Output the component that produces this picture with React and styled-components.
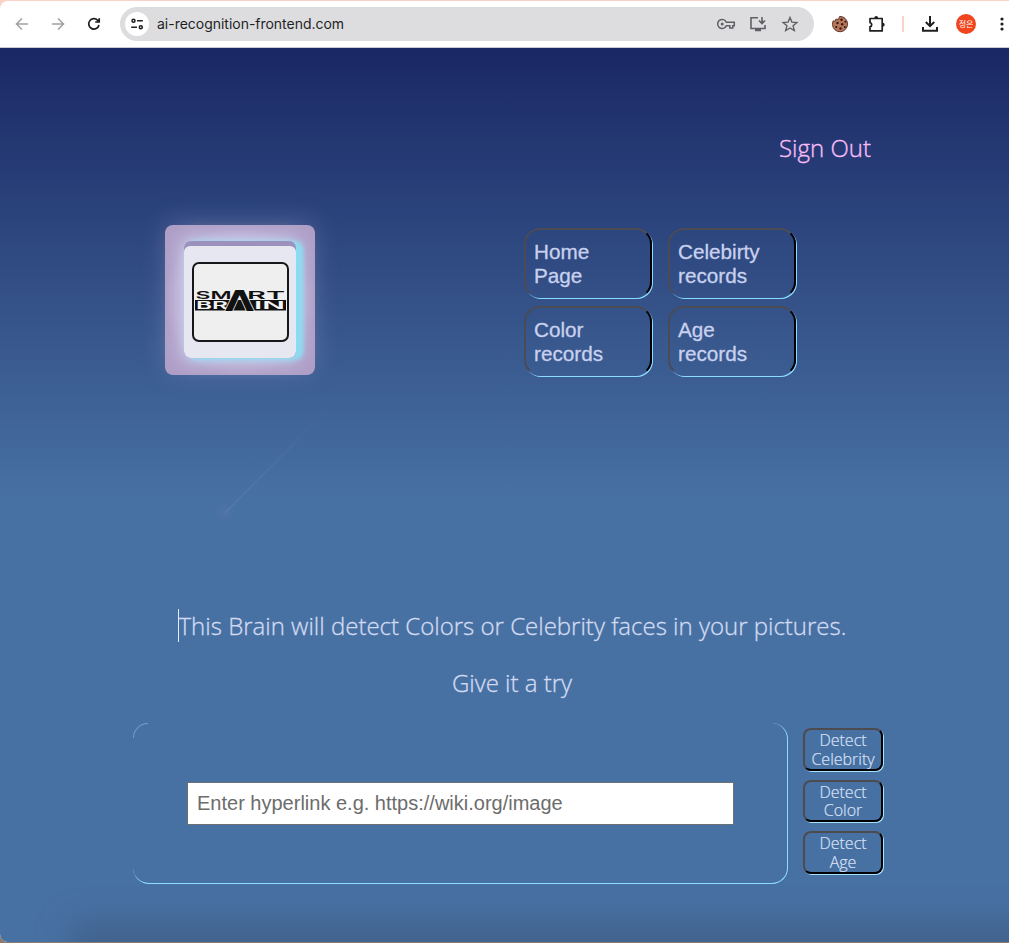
import React from 'react';
import styled, { createGlobalStyle } from 'styled-components';

const Global = createGlobalStyle`
  *, *::before, *::after { box-sizing: border-box; }
  html, body, #root { margin: 0; padding: 0; }
  body { width: 1009px; height: 943px; overflow: hidden; background: #a07a62; }
`;

const Desktop = styled.div`
  width: 1009px;
  height: 943px;
  overflow: hidden;
  background: linear-gradient(#fbd3c6 0 20px, #a9754f 20px 938px, #8d7a72 938px);
  font-family: "Open Sans", "Noto Sans", sans-serif;
`;
const Window = styled.div`
  width: 1017px;
  height: 941px;
  margin-top: 1px;
  border-radius: 8px 0 0 8px;
  overflow: hidden;
  display: flex;
  flex-direction: column;
  background: #fff;
`;
const Toolbar = styled.header`
  height: 47px;
  flex: none;
  display: flex;
  align-items: center;
  border-bottom: 1px solid #c8cbd2;
  color: #1f1f1f;
`;
const Icon = styled.svg`
  display: block;
  flex: none;
  width: ${p => p.$size || 20}px;
  height: ${p => p.$size || 20}px;
  margin-left: ${p => p.$gap || 0}px;
  fill: none;
  stroke: ${p => p.$color || '#1f1f1f'};
  stroke-width: ${p => p.$weight || 1.6};
`;
const AddressBar = styled.div`
  width: 694px;
  height: 34px;
  margin-left: 16px;
  border-radius: 17px;
  background: #dddde0;
  display: flex;
  align-items: center;
  padding: 0 14px 0 5px;
`;
const SiteInfo = styled.span`
  width: 24px;
  height: 24px;
  border-radius: 50%;
  background: #fff;
  display: grid;
  place-items: center;
`;
const Url = styled.span`
  flex: 1;
  margin-left: 8px;
  font: 400 14px/20px Inter, sans-serif;
  letter-spacing: -0.02px;
`;
const Separator = styled.span`
  width: 2px;
  height: 16px;
  margin-left: 15px;
  background: #f8d3c6;
`;
const Avatar = styled.span`
  width: 20px;
  height: 20px;
  margin-left: 16px;
  border-radius: 50%;
  background: #f0451d;
  color: #fff;
  display: grid;
  place-items: center;
  font: 8px/20px "Noto Sans CJK KR", sans-serif;
`;

const Page = styled.main`
  position: relative;
  width: 1009px;
  flex: 1;
  display: flex;
  flex-direction: column;
  background: linear-gradient(#1a2865 0, #4871a3 450px, #4871a3 100%);
  color: #d3dbf2;
  &::after {
    content: '';
    position: absolute;
    left: 70px;
    right: -60px;
    bottom: -26px;
    height: 46px;
    background: rgba(54, 76, 106, 0.4);
    filter: blur(16px);
  }
`;
const Comet = styled.svg`
  position: absolute;
  left: 210px;
  top: 340px;
  width: 130px;
  height: 150px;
`;
const SignOut = styled.a`
  align-self: flex-start;
  margin: 82px 0 0 779px;
  font-size: 24px;
  font-weight: 300;
  line-height: 36px;
  color: #f8bdf8;
  -webkit-text-stroke: 0.35px currentColor;
`;
const Header = styled.section`
  display: flex;
  justify-content: space-between;
  padding: 59px 212px 0 165px;
`;
const LogoCard = styled.div`
  width: 150px;
  height: 150px;
  border-radius: 8px;
  display: grid;
  place-items: center;
  background: radial-gradient(circle at 50% 50%, #c8bddc 35%, #af9fc7 72%);
  box-shadow: 0 -3px 26px rgba(195, 190, 230, 0.24);
`;
const LogoTile = styled.div`
  width: 112px;
  height: 117px;
  margin-top: -1px;
  border-radius: 7px;
  overflow: hidden;
  padding-top: 5px;
  background: #9c90bd;
  box-shadow: 7px 1px 4px #8bdcf2, 0 0 18px 3px rgba(211, 211, 240, 0.9), 3px 1px 9px #8bdcf2;
`;
const LogoImage = styled.svg`
  display: block;
  width: 112px;
  height: 112px;
  border-radius: 6px;
  background: #e6e7f1;
`;
const Nav = styled.nav`
  display: grid;
  grid-template-columns: 128px 128px;
  grid-auto-rows: 70px;
  gap: 8px 16px;
  padding-top: 3px;
  margin-right: 1px;
`;
const NavButton = styled.button`
  padding: 2px 30px 0 8px;
  border: 2px solid;
  border-color: #4b4b53 #000 transparent #4b4b53;
  border-radius: 16px;
  background: transparent;
  box-shadow: 1px 1px 0 #8cdcff;
  color: #c9d1ee;
  font: 20.7px/24px "Liberation Sans", sans-serif;
  -webkit-text-stroke: 0.3px currentColor;
  text-align: left;
`;
const Lead = styled.div`
  display: flex;
  flex-direction: column;
  align-items: center;
  margin: 233px 0 0 15px;
  font-size: 24px;
  font-weight: 300;
  line-height: 36px;
  gap: 21px;
  -webkit-text-stroke: 0.3px currentColor;
`;
const LeadText = styled.p`
  margin: 0;
  white-space: nowrap;
`;
const Typed = styled(LeadText)`
  border-left: 1px solid #e6ecf8;
  line-height: 33px;
  margin-bottom: 2px;
`;
const Detector = styled.section`
  display: flex;
  gap: 15px;
  margin: 22px 0 0 133px;
`;
const LinkForm = styled.form`
  position: relative;
  width: 655px;
  height: 161px;
  padding: 59px 54px 0;
  border-radius: 16px;
  border: solid #8cdcff;
  border-width: 0 1px 1px 0;
  &::before {
    content: '';
    position: absolute;
    left: 0;
    top: 0;
    width: 15px;
    height: 15px;
    border: solid rgba(140, 213, 251, 0.5);
    border-width: 1px 0 0 1px;
    border-top-left-radius: 15px;
  }
`;
const LinkInput = styled.input`
  width: 547px;
  height: 43px;
  padding: 0 9px;
  border: 1px solid #6c7075;
  border-radius: 0;
  background: #fff;
  font: 20px "Liberation Sans", sans-serif;
  &::placeholder { color: #6c6c6c; opacity: 1; }
`;
const Actions = styled.div`
  display: flex;
  flex-direction: column;
  gap: 9px;
  padding-top: 5px;
`;
const ActionButton = styled.button`
  width: 80px;
  height: 42.5px;
  padding: 1px 0 0;
  border: 2px solid;
  border-color: #4b4b50 #000 #000 #4b4b50;
  border-radius: 8px;
  background: transparent;
  box-shadow: 1px 1px 0 #a6e3fb;
  color: #d8e0f5;
  font: 300 16px/18.5px "Open Sans", sans-serif;
  -webkit-text-stroke: 0.2px currentColor;
`;

const navItems = [['Home', 'Page'], ['Celebirty', 'records'], ['Color', 'records'], ['Age', 'records']];
const actions = ['Celebrity', 'Color', 'Age'];

export default function App() {
  return (
    <Desktop>
      <Global />
      <Window>
        <Toolbar>
          <Icon $gap={12} $color="#a3a3a3" viewBox="0 0 20 20"><path d="M16 10H4.7M10 4.5 4.5 10l5.5 5.5" /></Icon>
          <Icon $gap={16} $color="#a3a3a3" viewBox="0 0 20 20"><path d="M4 10h11.3M10 4.5l5.5 5.5-5.5 5.5" /></Icon>
          <Icon $gap={16} $weight={1.7} viewBox="0 0 20 20"><path d="M15 11a5.2 5.2 0 1 1-1.3-4.7L15 7.7M15.2 4.3V8h-4" /></Icon>
          <AddressBar>
            <SiteInfo>
              <Icon $size={16} $weight={1.5} viewBox="0 0 16 16">
                <circle cx="4.5" cy="4.8" r="1.5" /><path d="M8 4.8h5.8M2.2 11.2H8" /><circle cx="11.8" cy="11.2" r="1.5" />
              </Icon>
            </SiteInfo>
            <Url>ai-recognition-frontend.com</Url>
            <Icon $color="#606064" $weight={1.5} viewBox="0 0 20 20">
              <path d="M10.3 8.2h8v3.6h-1.5V14h-3v-2.2h-3.5a4.5 4.5 0 1 1 0-3.6Z" /><circle cx="6.2" cy="10" r="1.5" fill="#606064" stroke="none" />
            </Icon>
            <Icon $gap={12} $color="#606064" viewBox="0 0 20 20">
              <path d="M10 3.8H3V14.5h14V11M14 3v6M11 6.5l3 3 3-3" /><path d="M7 16h6" strokeWidth="2.5" />
            </Icon>
            <Icon $gap={12} $color="#606064" $weight={1.4} viewBox="0 0 20 20">
              <path d="m10 3.5 1.9 4.6 5 .4-3.8 3.3 1.2 4.8-4.3-2.6-4.3 2.6 1.2-4.8-3.8-3.3 5-.4Z" />
            </Icon>
          </AddressBar>
          <Icon $gap={16} viewBox="0 0 20 20">
            <path d="M9.5 2.6c4.3-.6 8 3 8 7.400a7.500 7.500 0 0 1-15 .5c-.1-1.500.2-2.700.7-3.700l1.800.6.8-2.200 2.700.2Z" fill="#b8775a" stroke="#50261b" strokeWidth=".9" />
            <g fill="#351b17" stroke="none"><circle cx="11.5" cy="5.8" r="1.2" /><circle cx="7.5" cy="9" r="1.2" /><circle cx="12.2" cy="10.200" r="1.2" /><circle cx="15.4" cy="7.800" r="1" /><circle cx="6.300" cy="13" r="1.100" /><circle cx="10.500" cy="14.500" r="1.200" /><circle cx="14.800" cy="13" r="1" /></g>
          </Icon>
          <Icon $gap={17} $weight={1.7} viewBox="0 0 20 20">
            <path d="M3 4.500h12.200v12.400H3v-4.200c2.300-.2 2.300-3.800 0-4Z" strokeLinejoin="round" />
            <path d="M7.300 4a1.900 1.900 0 0 1 3.800 0ZM15.800 8.800a1.900 1.900 0 0 1 0 3.800Z" fill="#1f1f1f" stroke="none" />
          </Icon>
          <Separator />
          <Icon $gap={16} $weight={2} viewBox="0 0 20 20"><path d="M10 2v10M5.800 8l4.200 4.200L14.200 8M3 13v3.800h14V13" /></Icon>
          <Avatar>정은</Avatar>
          <Icon $gap={16} viewBox="0 0 20 20"><g fill="#1f1f1f" stroke="none"><circle cx="10" cy="5" r="1.600" /><circle cx="10" cy="10" r="1.600" /><circle cx="10" cy="15" r="1.600" /></g></Icon>
        </Toolbar>
        <Page>
          <Comet viewBox="0 0 130 150">
            <defs>
              <linearGradient id="trail" x1="0" y1="1" x2="1" y2="0"><stop stopColor="#7992c4" stopOpacity=".2" /><stop offset="1" stopColor="#7992c4" stopOpacity="0" /></linearGradient>
              <radialGradient id="glow"><stop stopColor="#6f78b4" stopOpacity=".22" /><stop offset="1" stopColor="#6684b7" stopOpacity="0" /></radialGradient>
            </defs>
            <path d="M15 125 120 19" stroke="url(#trail)" strokeWidth="2" />
            <circle cx="15" cy="125" r="10" fill="url(#glow)" />
          </Comet>
          <SignOut>Sign Out</SignOut>
          <Header>
            <LogoCard>
              <LogoTile>
                <LogoImage viewBox="0 0 112 112">
                  <rect x="9" y="17" width="95" height="78" rx="6" fill="#efeff0" stroke="#17171b" strokeWidth="2" />
                  <g fill="#111" fontFamily="Inter" fontWeight="600">
                    <text x="11.500" y="53" fontSize="10.500" textLength="36" lengthAdjust="spacingAndGlyphs">SM</text>
                    <text x="63" y="53" fontSize="10.500" textLength="38" lengthAdjust="spacingAndGlyphs">RT</text>
                  </g>
                  <rect x="11" y="54" width="91" height="10.500" fill="#111" />
                  <g fill="#f3f3f3" fontFamily="Inter" fontWeight="600">
                    <text x="12" y="63" fontSize="10.500" textLength="32" lengthAdjust="spacingAndGlyphs">BR</text>
                    <text x="70" y="63" fontSize="10.500" textLength="31" lengthAdjust="spacingAndGlyphs">IN</text>
                  </g>
                  <text x="41" y="64.500" fontSize="28" fontFamily="DejaVu Sans" fontWeight="700" textLength="29" lengthAdjust="spacingAndGlyphs" fill="#111" stroke="#efeff0" strokeWidth="1.200" paintOrder="stroke">Λ</text>
                </LogoImage>
              </LogoTile>
            </LogoCard>
            <Nav>
              {navItems.map(([first, second]) => <NavButton key={first}>{first}<br />{second}</NavButton>)}
            </Nav>
          </Header>
          <Lead>
            <Typed>This Brain will detect Colors or Celebrity faces in your pictures.</Typed>
            <LeadText>Give it a try</LeadText>
          </Lead>
          <Detector>
            <LinkForm><LinkInput placeholder="Enter hyperlink e.g. https://wiki.org/image" /></LinkForm>
            <Actions>
              {actions.map(name => <ActionButton key={name}>Detect<br />{name}</ActionButton>)}
            </Actions>
          </Detector>
        </Page>
      </Window>
    </Desktop>
  );
}
